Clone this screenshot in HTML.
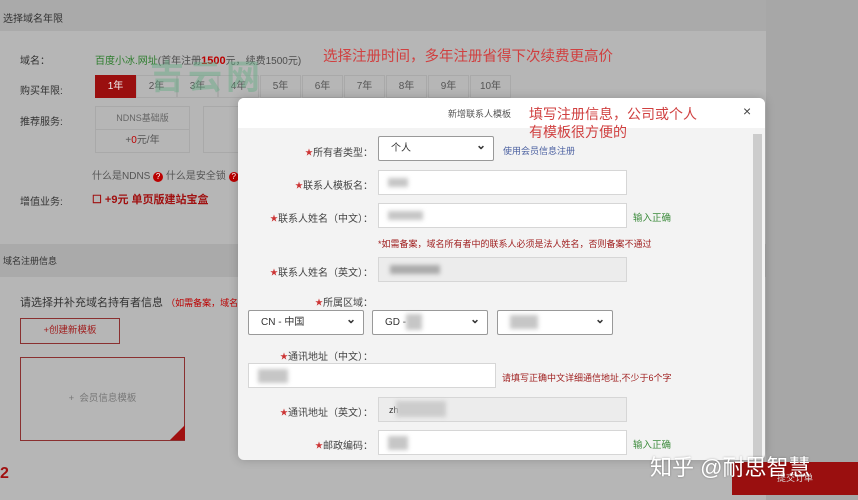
<!DOCTYPE html>
<html><head><meta charset="utf-8"><style>
*{margin:0;padding:0;box-sizing:border-box}
body{width:858px;height:500px;overflow:hidden;background:#a7a7a7;font-family:"Liberation Sans","Noto Sans CJK SC",sans-serif;font-size:10px;color:#333;position:relative}
.a{position:absolute;white-space:nowrap}
.pg{position:absolute;left:0;top:0;width:766px;height:500px;background:#b6b6b6}
.band{position:absolute;left:0;width:766px;background:#aaa}
.red{color:#b00}
.yr{position:absolute;top:75px;width:41px;height:23px;border:1px solid #a9a9a9;text-align:center;line-height:21px;color:#555}
.modal{position:absolute;left:238px;top:98px;width:527px;height:362px;background:#f3f3f3;border-radius:6px;overflow:hidden;box-shadow:0 0 10px rgba(0,0,0,.2)}
.mh{height:30px;background:#fff}
.lbl{position:absolute;font-size:10px;color:#444;text-align:right;white-space:nowrap}
.lbl b{color:#c33;font-weight:normal;font-size:8px;vertical-align:1px}
.in{position:absolute;height:25px;background:#fff;border:1px solid #d6d6d6}
.in.g{background:#ececec}
.sel{position:absolute;height:25px;background:#fff;border:1px solid #999;border-radius:2px;font-size:10px;line-height:23px;padding-left:12px}
.sel:after{content:"⌄";position:absolute;right:7px;top:-3px;font-size:12px;font-weight:bold}
.blur{position:absolute;background:#c6c6c6;filter:blur(2px)}
.ok{position:absolute;color:#3a8a3a;font-size:9.5px}
</style></head><body>
<div class="pg"></div>
<div class="band" style="top:0;height:31px"></div>
<div class="a" style="left:3px;top:10px;font-size:10px">选择域名年限</div>
<div class="a" style="left:20px;top:52px">域名：</div>
<div class="a" style="left:95px;top:52px;color:#4d4d4d"><span style="color:#2d7d2d">百度小冰.网址</span>(首年注册<b class="red" style="font-size:11px">1500</b>元，续费1500元)</div>
<div class="a" style="left:323px;top:45px;font-size:14.5px;color:#d04040">选择注册时间，多年注册省得下次续费更高价</div>
<div class="a" style="left:20px;top:82px">购买年限:</div>
<div class="yr" style="left:95px;background:#9a0f0f;color:#eee;border-color:#9a0f0f">1年</div>
<div class="yr" style="left:136px">2年</div><div class="yr" style="left:177px">3年</div><div class="yr" style="left:218px">4年</div><div class="yr" style="left:260px">5年</div><div class="yr" style="left:302px">6年</div><div class="yr" style="left:344px">7年</div><div class="yr" style="left:386px">8年</div><div class="yr" style="left:428px">9年</div><div class="yr" style="left:470px">10年</div>
<div class="a" style="left:150px;top:58px;font-size:34px;line-height:40px;font-weight:bold;color:rgba(100,170,130,.45);letter-spacing:4px">吉云网</div>
<div class="a" style="left:20px;top:113px">推荐服务:</div>
<div class="a" style="left:95px;top:106px;width:95px;height:47px;border:1px solid #a9a9a9"><div style="height:23px;border-bottom:1px solid #a9a9a9;text-align:center;line-height:22px;color:#666;font-size:9px">NDNS基础版</div><div style="text-align:center;line-height:22px;color:#555">+<span class="red">0</span>元/年</div></div>
<div class="a" style="left:203px;top:106px;width:40px;height:47px;border:1px solid #a9a9a9;border-right:none"></div>
<div class="a" style="left:92px;top:167px;color:#555">什么是NDNS <span style="display:inline-block;width:10px;height:10px;border-radius:50%;background:#b00;color:#fff;font-size:8px;text-align:center;line-height:10px">?</span> 什么是安全锁 <span style="display:inline-block;width:10px;height:10px;border-radius:50%;background:#b00;color:#fff;font-size:8px;text-align:center;line-height:10px">?</span></div>
<div class="a" style="left:20px;top:193px">增值业务:</div>
<div class="a" style="left:92px;top:191px;font-size:11px;font-weight:bold;color:#a01010">☐ +9元 单页版建站宝盒</div>
<div class="band" style="top:244px;height:33px"></div>
<div class="a" style="left:3px;top:254px;font-size:9px">域名注册信息</div>
<div class="a" style="left:20px;top:294px;font-size:11px">请选择并补充域名持有者信息 <span class="red" style="font-size:9px">（如需备案，域名所</span></div>
<div class="a" style="left:20px;top:318px;width:100px;height:26px;border:1px solid #8a3030;text-align:center;line-height:24px;color:#a02020;font-size:9.5px">+创建新模板</div>
<div class="a" style="left:20px;top:357px;width:165px;height:84px;border:1px solid #8a3030;text-align:center;line-height:82px;color:#777;font-size:9.5px">+&nbsp; 会员信息模板</div>
<div class="a" style="left:170px;top:425px;width:0;height:0;border-left:15px solid transparent;border-bottom:15px solid #a01010"></div>
<div class="a" style="left:0;top:465px;font-size:16px;color:#a01010;font-weight:bold">2</div>
<div class="a" style="left:732px;top:462px;width:126px;height:33px;background:#9a0f0f;color:#ddd;text-align:center;line-height:33px;font-size:9px">提交订单</div>
<div class="modal">
 <div class="mh"></div>
 <div class="a" style="left:210px;top:9px;font-size:9px;color:#555">新增联系人模板</div>
 <div class="a" style="left:291px;top:7px;font-size:14px;line-height:18px;color:#d04040">填写注册信息，公司或个人<br>有模板很方便的</div>
 <div class="a" style="left:505px;top:5px;font-size:14px;color:#444">×</div>
 <div class="a" style="left:515px;top:36px;width:9px;height:326px;background:#ccc"></div>
 <div class="lbl" style="right:392px;top:46px"><b>★</b>所有者类型：</div>
 <div class="sel" style="left:140px;top:38px;width:116px">个人</div>
 <div class="a" style="left:265px;top:46px;font-size:9px;color:#4a5fa0">使用会员信息注册</div>
 <div class="lbl" style="right:392px;top:79px"><b>★</b>联系人模板名：</div>
 <div class="in" style="left:140px;top:72px;width:249px"></div><div class="blur" style="left:150px;top:80px;width:20px;height:9px"></div>
 <div class="lbl" style="right:392px;top:112px"><b>★</b>联系人姓名（中文）：</div>
 <div class="in" style="left:140px;top:105px;width:249px"></div><div class="blur" style="left:150px;top:113px;width:35px;height:9px"></div>
 <div class="ok" style="left:395px;top:112px">输入正确</div>
 <div class="a" style="left:140px;top:139px;font-size:9px;color:#a02020">*如需备案，域名所有者中的联系人必须是法人姓名，否则备案不通过</div>
 <div class="lbl" style="right:392px;top:166px"><b>★</b>联系人姓名（英文）：</div>
 <div class="in g" style="left:140px;top:159px;width:249px"></div><div class="blur" style="left:152px;top:167px;width:50px;height:9px;background:#aaa"></div>
 <div class="lbl" style="right:392px;top:196px"><b>★</b>所属区域：</div>
 <div class="sel" style="left:10px;top:212px;width:116px">CN - 中国</div>
 <div class="sel" style="left:134px;top:212px;width:116px">GD -</div><div class="blur" style="left:168px;top:216px;width:16px;height:16px"></div>
 <div class="sel" style="left:259px;top:212px;width:116px"></div><div class="blur" style="left:272px;top:217px;width:28px;height:14px"></div>
 <div class="lbl" style="right:392px;top:250px"><b>★</b>通讯地址（中文）：</div>
 <div class="in" style="left:10px;top:265px;width:248px"></div><div class="blur" style="left:20px;top:271px;width:30px;height:14px"></div>
 <div class="a" style="left:264px;top:273px;font-size:9px;color:#a02020">请填写正确中文详细通信地址,不少于6个字</div>
 <div class="lbl" style="right:392px;top:306px"><b>★</b>通讯地址（英文）：</div>
 <div class="in g" style="left:140px;top:299px;width:249px;font-size:9px;padding:7px 0 0 10px">zh</div><div class="blur" style="left:158px;top:303px;width:50px;height:16px;background:#ccc"></div>
 <div class="lbl" style="right:392px;top:339px"><b>★</b>邮政编码：</div>
 <div class="in" style="left:140px;top:332px;width:249px"></div><div class="blur" style="left:150px;top:338px;width:20px;height:14px"></div>
 <div class="ok" style="left:395px;top:339px">输入正确</div>
</div>
<div class="a" style="left:650px;top:450px;font-size:22px;color:#fff;text-shadow:0 0 2px rgba(0,0,0,.3)">知乎 @耐思智慧</div>
</body></html>
